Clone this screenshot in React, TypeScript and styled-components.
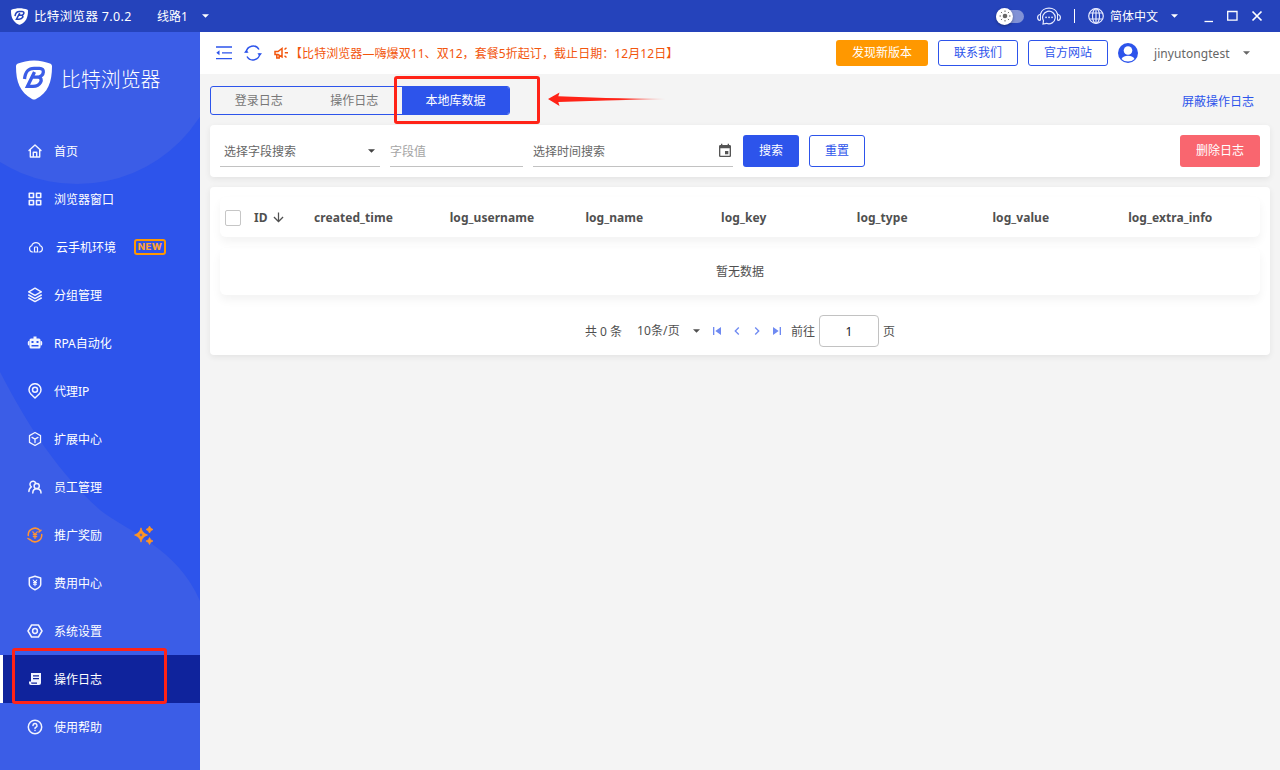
import React from "react";
import styled, { createGlobalStyle, css } from "styled-components";
import {
  MdChevronLeft,
  MdChevronRight,
  MdEvent,
  MdSkipNext,
  MdSkipPrevious,
  MdArrowDownward,
} from "react-icons/md";

const GlobalStyle = createGlobalStyle`
  * { box-sizing: border-box; }
  body {
    margin: 0;
    background: #f4f4f4;
    color: #505050;
    font: 12px/20px "Noto Sans", "Noto Sans CJK SC", sans-serif;
  }
  button, input { font: inherit; }
  svg { display: block; flex: none; }
`;

const Window = styled.div`
  position: relative;
  display: flex;
  flex-direction: column;
  width: 1280px;
  height: 770px;
  overflow: hidden;
`;

const TitleBar = styled.header`
  display: flex;
  align-items: center;
  height: 32px;
  padding: 0 17px 0 11px;
  background: #2543bb;
  color: #fff;
  white-space: nowrap;
`;

const Label = styled.span`
  padding-top: 2px;
`;

const AppName = styled(Label)`
  width: 99px;
  margin-left: 6px;
  font-size: 12.5px;
  letter-spacing: 0.35px;
`;

const RouteName = styled(Label)`
  margin-left: 24px;
  width: 44px;
`;

const TitleTools = styled.div`
  display: flex;
  align-items: center;
  margin-left: auto;
`;

const ThemeSwitch = styled.div`
  display: flex;
  align-items: center;
  width: 28px;
  height: 13px;
  margin-right: 13px;
  border-radius: 7px;
  background: #8192d6;
`;

const Knob = styled.span`
  display: grid;
  place-items: center;
  width: 17px;
  height: 17px;
  border-radius: 50%;
  background: #fff;
  box-shadow: 0 1px 3px rgba(0, 0, 0, 0.35);
`;

const ToolDivider = styled.span`
  width: 1px;
  height: 14px;
  margin: 0 13px;
  background: #fff;
`;

const Language = styled(Label)`
  width: 60px;
  margin-left: 6px;
`;

const ControlsHolder = styled.span`
  margin-left: 25px;
`;

const Body = styled.div`
  display: flex;
  flex: 1;
  min-height: 0;
`;

const Sidebar = styled.nav`
  position: relative;
  width: 200px;
  background: #2d54eb;
  color: #fff;
`;

const SidebarArt = styled.svg`
  position: absolute;
  inset: 0;
`;

const Brand = styled.div`
  position: relative;
  display: flex;
  align-items: center;
  gap: 9px;
  height: 95px;
  padding: 0 0 0 16px;
  font-size: 19.9px;
  font-weight: 300;
  white-space: nowrap;
`;

const NavItem = styled.a<{ $active?: boolean }>`
  position: relative;
  display: flex;
  align-items: center;
  height: 48px;
  padding-left: ${(p) => (p.$active ? 25 : 28)}px;
  color: #fff;
  ${(p) =>
    p.$active &&
    css`
      border-left: 3px solid #fff;
      background: #0f239c;
    `}
`;

const NavIcon = styled.span<{ $accent?: boolean; $wide?: boolean }>`
  display: flex;
  align-items: center;
  justify-content: center;
  width: ${(p) => (p.$wide ? 16 : 14)}px;
  margin-right: 12px;
  color: ${(p) => (p.$accent ? "#ff9433" : "#f2f4ff")};
`;

const NewBadge = styled.span`
  width: 32px;
  height: 16px;
  margin-left: 18px;
  border: 2px solid #ff9800;
  border-radius: 3px;
  color: #ffa033;
  font: 800 9.5px/12px Inter, sans-serif;
  letter-spacing: 0.4px;
  text-align: center;
`;

const SparkHolder = styled.span`
  margin-left: 32px;
`;

const Main = styled.main`
  display: flex;
  flex: 1;
  flex-direction: column;
  min-width: 0;
`;

const TopBar = styled.div`
  display: flex;
  align-items: center;
  height: 42px;
  padding: 0 29px 0 16px;
  background: #fff;
`;

const TopIcons = styled.div`
  display: flex;
  align-items: center;
  gap: 11px;
`;

const Notice = styled(Label)`
  margin-left: 1px;
  color: #f2560d;
  letter-spacing: 0.07px;
  white-space: nowrap;
`;

const TopActions = styled.div`
  display: flex;
  align-items: center;
  gap: 10px;
  margin-left: auto;
`;

type Tone = "orange" | "blue" | "outline" | "red";

const tones: Record<Tone, ReturnType<typeof css>> = {
  orange: css`
    background: #ff9800;
    color: #fff;
  `,
  blue: css`
    background: #2d54eb;
    color: #fff;
  `,
  outline: css`
    border: 1px solid #2d54eb;
    background: #fff;
    color: #2d54eb;
  `,
  red: css`
    background: #f9666f;
    color: #fff;
  `,
};

const Button = styled.button<{ $tone: Tone; $width: number; $tall?: boolean }>`
  width: ${(p) => p.$width}px;
  height: ${(p) => (p.$tall ? 32 : 26)}px;
  padding: 0;
  border: 0;
  border-radius: 3px;
  white-space: nowrap;
  ${(p) => tones[p.$tone]}
`;

const UserName = styled(Label)`
  width: 78px;
  margin: 0 0 0 6px;
  color: #666;
  letter-spacing: 0.07px;
`;

const TabRow = styled.div`
  display: flex;
  align-items: center;
  justify-content: space-between;
  height: 29px;
  margin: 12px 26px 10px 10px;
`;

const Tabs = styled.div`
  display: flex;
  width: 300px;
  height: 29px;
  border: 1px solid #2d54eb;
  border-radius: 3px;
  overflow: hidden;
`;

const Tab = styled.button<{ $active?: boolean }>`
  flex: ${(p) => (p.$active ? "0 0 107px" : "0 0 95.500px")};
  padding: 0;
  border: 0;
  background: ${(p) => (p.$active ? "#2d54eb" : "transparent")};
  color: ${(p) => (p.$active ? "#fff" : "#777")};
`;

const HideLink = styled(Label)`
  color: #2d54eb;
`;

const Card = styled.section`
  margin: 0 10px 10px;
  border-radius: 4px;
  background: #fff;
  box-shadow: 0 2px 6px rgba(0, 0, 0, 0.07);
`;

const FilterCard = styled(Card)`
  display: flex;
  align-items: center;
  gap: 10px;
  height: 52px;
  padding: 0 10px;
`;

const Field = styled.div<{ $width: number; $indent?: number; $end?: number; $muted?: boolean }>`
  display: flex;
  align-items: center;
  justify-content: space-between;
  width: ${(p) => p.$width}px;
  height: 31px;
  padding: 0 ${(p) => p.$end ?? 0}px 0 ${(p) => p.$indent ?? 0}px;
  border-bottom: 1px solid #c2c2c2;
  color: ${(p) => (p.$muted ? "#a5a5a5" : "#666")};
`;

const PushRight = styled.div`
  margin-left: auto;
`;

const TableCard = styled(Card)`
  height: 168px;
  padding: 10px;
`;

const TableRow = styled.div`
  display: flex;
  align-items: center;
  height: 40px;
  border-radius: 6px;
  box-shadow: 0 5px 10px rgba(0, 0, 0, 0.05);
  font-size: 12px;
  font-weight: 700;
`;

const CheckBox = styled.span`
  flex: none;
  width: 16px;
  height: 16px;
  margin: 1px 13px 0 5px;
  border: 1px solid #c6c6c6;
  border-radius: 2px;
`;

const IdCell = styled.span`
  display: flex;
  flex: none;
  align-items: center;
  gap: 4px;
  width: 60px;
`;

const HeadCell = styled(Label)`
  flex: 0 0 135.7px;
  letter-spacing: 0.06px;
  &:last-child {
    flex: 1 1 0;
    min-width: 0;
  }
`;

const EmptyRow = styled.div`
  display: grid;
  place-items: center;
  height: 47px;
  margin-top: 11px;
  border-radius: 6px;
  box-shadow: 0 5px 10px rgba(0, 0, 0, 0.05);
`;

const Pager = styled.div`
  display: flex;
  align-items: center;
  height: 32px;
  margin: 20px 0 0 365px;
  white-space: nowrap;
`;

const PagerText = styled(Label)<{ $width: number }>`
  width: ${(p) => p.$width}px;
`;

const PageSize = styled.span`
  width: 55px;
  letter-spacing: 0.12px;
`;

const PagerIcons = styled.span`
  display: flex;
  gap: 4px;
  margin: 0 6px 0 8px;
  color: #6f8af2;
`;

const PageInput = styled.input`
  width: 60px;
  height: 32px;
  margin-right: 4px;
  padding: 0;
  border: 1px solid #c2c2c2;
  border-radius: 4px;
  background: #fff;
  color: #222;
  text-align: center;
`;

const Highlight = styled.div<{ $x: number; $y: number; $w: number; $h: number }>`
  position: absolute;
  left: ${(p) => p.$x}px;
  top: ${(p) => p.$y}px;
  width: ${(p) => p.$w}px;
  height: ${(p) => p.$h}px;
  border: 3px solid #ff2317;
  border-radius: 3px;
`;

const ArrowMark = styled.svg`
  position: absolute;
  left: 546px;
  top: 90px;
`;

const Caret = ({ color = "currentColor" }: { color?: string }) => (
  <svg width="9" height="4" viewBox="0 0 9 4">
    <path d="M1 0.300H8L4.500 3.800Z" fill={color} />
  </svg>
);

const Shield = ({ width, height, hole }: { width: number; height: number; hole: string }) => (
  <svg width={width} height={height} viewBox="0 0 36 40" preserveAspectRatio="none">
    <path d="M18 0.500C24 .5 30 2 34 3.500C35.500 4 36 5 36 6.500C36 22 32 33 20 39Q18 40 16 39C4 32 0 22 0 6.500C0 5 .5 4 2 3.500C6 2 12 .5 18 .5Z" fill="#fff" />
    <path
      d="M8.500 19C9.500 11 12.500 8.300 18 8.300H23.500C29 8.300 28.500 15.500 22.500 17.200C28 18.500 24.500 26.300 17 26.300H11.500L18.500 12M16.500 17.200H22"
      fill="none"
      stroke={hole}
      strokeWidth="3.300"
    />
  </svg>
);

const Stroke = ({ size = 16, width = 1.3, children }: { size?: number; width?: number; children: React.ReactNode }) => (
  <svg width={size} height={size} viewBox="0 0 16 16" fill="none" stroke="currentColor" strokeWidth={width} strokeLinejoin="round" strokeLinecap="round">
    {children}
  </svg>
);

const HomeIcon = () => (
  <Stroke width={1.4}>
    <path d="M2 7.600 8 2l6 5.600M3.300 6.800V14h9.400V6.800M6.300 14V9.300h3.400V14" />
  </Stroke>
);

const GridIcon = () => (
  <Stroke width={1.6}>
    <path d="M2.300 2.300h4.200v4.200h-4.200zM9.500 2.300h4.200v4.200h-4.200zM2.300 9.500h4.200v4.200h-4.200zM9.500 9.500h4.200v4.200h-4.200z" />
  </Stroke>
);

const CloudIcon = () => (
  <Stroke width={1.2}>
    <path d="M5 13H4.300A3.200 3.200 0 0 1 3.700 6.800 4.400 4.400 0 0 1 12.200 6.800 3.200 3.200 0 0 1 11.700 13H11M6.500 13V8.800q0-.8.8-.8h1.400q.8 0 .8.8V13M6.500 13h3" />
  </Stroke>
);

const LayersIcon = () => (
  <Stroke width={1.5}>
    <path d="M8 1.200 14.300 4.800 8 8.400 1.700 4.800ZM1.700 8 8 11.600 14.300 8M1.700 11 8 14.600 14.300 11" />
  </Stroke>
);

const RobotIcon = () => (
  <svg width="16" height="16" viewBox="0 0 16 16" fill="currentColor">
    <path
      fillRule="evenodd"
      d="M6.500 1.500h3V3.500H12Q13.500 3.500 13.500 5V12Q13.500 13.500 12 13.500H4Q2.500 13.500 2.500 12V5Q2.500 3.500 4 3.500H6.500ZM4.500 6v2h2V6ZM9.500 6v2h2V6ZM4.500 10v1.500h7V10Z"
    />
    <path d="M2.500 6v4.500H2Q.8 10.500.8 9.300V7.200Q.8 6 2 6ZM13.500 6v4.500h.5q1.200 0 1.200-1.200V7.200Q15.200 6 14 6Z" />
  </svg>
);

const PinIcon = () => (
  <Stroke width={1.5}>
    <path d="M8 15 3.800 11A6 6 0 1 1 12.200 11Z" />
    <circle cx="8" cy="6.800" r="2.500" />
  </Stroke>
);

const BoxIcon = () => (
  <Stroke width={1.3}>
    <path d="M8 1.500 13.500 4.600V11.400L8 14.500 2.500 11.400V4.600ZM5 6.400l3 1.700 3-1.700M8 8.100v3.400" />
  </Stroke>
);

const PeopleIcon = () => (
  <Stroke width={1.5}>
    <path d="M1.900 12.500c0-2.300.8-3.700 2.500-4.700A3 3 0 1 1 8.700 4" />
    <circle cx="9.700" cy="7" r="2.600" />
    <path d="M5.800 14c0-2.600 1.500-4.300 3.900-4.300S14 11.400 14 14" />
  </Stroke>
);

const RewardIcon = () => (
  <Stroke width={1.5}>
    <path d="M1.300 8.500A6.700 6.700 0 0 1 13 3.500M14.700 7.500A6.700 6.700 0 0 1 3 12.500M14 3.200 12 5M1 11.500l1.800 1.200" />
    <path d="M5.800 4.800 8 7.400l2.200-2.600M8 7.400v4M6.300 7.700h3.400M6.300 9.600h3.400" strokeWidth="1.200" />
  </Stroke>
);

const FeeIcon = () => (
  <Stroke width={1.5}>
    <path d="M8 1.200 13.700 3v6.500c0 2.200-2.500 3.800-5.700 5.300-3.200-1.500-5.700-3.100-5.700-5.300V3Z" />
    <path d="M6.200 5 8 7.200 9.800 5M8 7.400v3.300M6.500 7.600h3M6.500 9.200h3" strokeWidth="1.100" />
  </Stroke>
);

const SettingsIcon = () => (
  <Stroke width={1.5}>
    <path d="M4.600 2h6.800L15 8l-3.600 6H4.600L1 8Z" />
    <circle cx="8" cy="8" r="2.400" />
  </Stroke>
);

const LogIcon = () => (
  <svg width="16" height="16" viewBox="0 0 16 16" fill="currentColor">
    <path fillRule="evenodd" d="M4 2H14V12Q14 14 12 14H4Q2 14 2 12V10.500H4ZM6 4.200V5.500h6V4.200ZM6 7V8.300h6V7ZM4 11.500Q4 12.800 5 12.800h5V11.500Z" />
  </svg>
);

const HelpIcon = () => (
  <Stroke width={1.5}>
    <circle cx="8" cy="8" r="6.700" />
    <path d="M6 6.500A2 2 0 1 1 8.900 8.300Q8 8.700 8 9.400M8 11.500v.1" />
  </Stroke>
);

const SparkIcon = () => (
  <svg width="20" height="20" viewBox="0 0 20 20" fill="#ff9422">
    <path fillRule="evenodd" d="M7 2.800Q8 8 13.500 10 8 12 7 17.200 6 12 .5 10 6 8 7 2.800ZM7 8.600a1.400 1.400 0 1 0 0 2.800 1.400 1.400 0 0 0 0-2.800Z" stroke="#ff9422" strokeWidth="0.700" />
    <path d="M15.500 1Q16.200 3.800 19 4.500 16.200 5.200 15.500 8 14.800 5.200 12 4.500 14.800 3.800 15.500 1ZM15.500 12.500q.7 2.800 3.500 3.500-2.800.7-3.500 3.500-.7-2.800-3.500-3.500 2.800-.7 3.500-3.500Z" stroke="#ff9422" strokeWidth="0.700" />
  </svg>
);

const SunIcon = () => (
  <svg width="12" height="12" viewBox="0 0 12 12" stroke="#666" strokeWidth="1">
    <circle cx="6" cy="6" r="2.300" fill="#666" stroke="none" />
    <path d="M6 .5v1.500M6 10v1.500M.5 6H2M10 6h1.500M2.100 2.100l1 1M8.900 8.900l1 1M2.100 9.900l1-1M8.900 3.100l1-1" />
  </svg>
);

const SupportIcon = () => (
  <svg width="24" height="18" viewBox="0 0 24 18" fill="none" stroke="#e6eaff" strokeWidth="1.200" strokeLinecap="round">
    <path d="M3.500 7A8.700 7.500 0 0 1 20.500 7M3 7.500Q.6 8 .6 10.500T3 13.500M21 7.500q2.400.5 2.400 3T21 13.500" />
    <path d="M3.500 7.500v5.500M20.500 7.500v5.500" strokeWidth="1" />
    <path d="M6 17l.5-3.300A6.300 6.300 0 1 1 9.500 16.300Z" />
    <path d="M9 10.300h.1M12 10.300h.1M15 10.300h.1" strokeWidth="1.700" />
  </svg>
);

const GlobeIcon = () => (
  <svg width="16" height="16" viewBox="0 0 16 16" fill="none" stroke="#e6eaff" strokeWidth="1.200">
    <circle cx="8" cy="8" r="7.300" />
    <ellipse cx="8" cy="8" rx="3.500" ry="7.300" />
    <path d="M8 .7v14.600M1.500 5h13M1.500 11h13" />
  </svg>
);

const WindowControls = () => (
  <svg width="59" height="14" viewBox="0 0 59 14" fill="none" stroke="#fff" strokeWidth="1.300">
    <path d="M0.500 12.500h8.500" />
    <path d="M23.700 2.500h9.300v8.700h-9.300z" />
    <path d="M48.500 2.500l9 9M57.500 2.500l-9 9" strokeWidth="1.700" />
  </svg>
);

const CollapseIcon = () => (
  <svg width="16" height="14" viewBox="0 0 16 14" stroke="#2d54eb" strokeWidth="1.300">
    <path d="M0 1h16M6 6.800h10M0 12.600h16" />
    <path d="M3.500 4.300V9.300L.3 6.800Z" fill="#2d54eb" stroke="none" />
  </svg>
);

const RefreshIcon = () => (
  <svg width="20" height="16" viewBox="-1 0 20 16" fill="none" stroke="#2d54eb" strokeWidth="1.400">
    <path d="M2.300 7.500A6.800 6.800 0 0 1 15 4.500M15.700 8.500A6.800 6.800 0 0 1 3 11.500" />
    <path d="M0 7.800h4.600L2.300 4.800ZM13.400 8.200H18l-2.300 3Z" fill="#2d54eb" stroke="none" />
  </svg>
);

const HornIcon = () => (
  <svg width="15" height="14" viewBox="1 0 15 14" fill="none" stroke="#f2560d" strokeWidth="1.500">
    <path d="M2 5.500h3L9 2.500v8.500L5 8.500H2ZM3.800 8.800V12h2.400V9" />
    <path d="M11.500 3.500l2-1.700M11.800 6.700H15M11.500 9.800l2 1.700" />
  </svg>
);

const AvatarIcon = () => (
  <svg width="20" height="20" viewBox="0 0 20 20">
    <circle cx="10" cy="10" r="10" fill="#2d54eb" />
    <circle cx="10" cy="7.500" r="4.300" fill="#fff" />
    <path d="M3.500 16Q5.500 12.700 10 12.700T16.500 16Q14 18.600 10 18.600T3.500 16Z" fill="#fff" />
  </svg>
);

const navItems: { label: string; icon: React.ReactNode; badge?: boolean; spark?: boolean; active?: boolean }[] = [
  { label: "首页", icon: <HomeIcon /> },
  { label: "浏览器窗口", icon: <GridIcon /> },
  { label: "云手机环境", icon: <CloudIcon />, badge: true },
  { label: "分组管理", icon: <LayersIcon /> },
  { label: "RPA自动化", icon: <RobotIcon /> },
  { label: "代理IP", icon: <PinIcon /> },
  { label: "扩展中心", icon: <BoxIcon /> },
  { label: "员工管理", icon: <PeopleIcon /> },
  { label: "推广奖励", icon: <RewardIcon />, spark: true },
  { label: "费用中心", icon: <FeeIcon /> },
  { label: "系统设置", icon: <SettingsIcon /> },
  { label: "操作日志", icon: <LogIcon />, active: true },
  { label: "使用帮助", icon: <HelpIcon /> },
];

const columns = ["created_time", "log_username", "log_name", "log_key", "log_type", "log_value", "log_extra_info"];

export default function App() {
  return (
    <Window>
      <GlobalStyle />
      <TitleBar>
        <Shield width={17} height={17} hole="#2543bb" />
        <AppName>比特浏览器 7.0.2</AppName>
        <RouteName>线路1</RouteName>
        <Caret />
        <TitleTools>
          <ThemeSwitch>
            <Knob>
              <SunIcon />
            </Knob>
          </ThemeSwitch>
          <SupportIcon />
          <ToolDivider />
          <GlobeIcon />
          <Language>简体中文</Language>
          <Caret />
          <ControlsHolder>
            <WindowControls />
          </ControlsHolder>
        </TitleTools>
      </TitleBar>
      <Body>
        <Sidebar>
          <SidebarArt width="200" height="738" viewBox="0 32 200 738">
            <circle cx="77" cy="38" r="146" fill="#3b5de7" />
            <path d="M0 372C20 410 50 465 100 510C125 530 178 548 200 601V770H0Z" fill="#3b5de7" />
          </SidebarArt>
          <Brand>
            <Shield width={36} height={40} hole="#3b5de7" />
            比特浏览器
          </Brand>
          {navItems.map((item) => (
            <NavItem key={item.label} $active={item.active}>
              <NavIcon $accent={item.spark} $wide={item.badge}>
                {item.icon}
              </NavIcon>
              <Label>{item.label}</Label>
              {item.badge && <NewBadge>NEW</NewBadge>}
              {item.spark && (
                <SparkHolder>
                  <SparkIcon />
                </SparkHolder>
              )}
            </NavItem>
          ))}
        </Sidebar>
        <Main>
          <TopBar>
            <TopIcons>
              <CollapseIcon />
              <RefreshIcon />
              <HornIcon />
            </TopIcons>
            <Notice>【比特浏览器—嗨爆双11、双12，套餐5折起订，截止日期：12月12日】</Notice>
            <TopActions>
              <Button $tone="orange" $width={92}>发现新版本</Button>
              <Button $tone="outline" $width={80}>联系我们</Button>
              <Button $tone="outline" $width={80}>官方网站</Button>
              <AvatarIcon />
              <UserName>jinyutongtest</UserName>
              <Caret color="#666" />
            </TopActions>
          </TopBar>
          <TabRow>
            <Tabs>
              <Tab>登录日志</Tab>
              <Tab>操作日志</Tab>
              <Tab $active>本地库数据</Tab>
            </Tabs>
            <HideLink>屏蔽操作日志</HideLink>
          </TabRow>
          <FilterCard>
            <Field $width={160} $indent={4} $end={4}>
              <Label>选择字段搜索</Label>
              <Caret color="#444" />
            </Field>
            <Field $width={133} $muted>
              <Label>字段值</Label>
            </Field>
            <Field $width={200}>
              <Label>选择时间搜索</Label>
              <MdEvent size={16} color="#555" />
            </Field>
            <Button $tone="blue" $width={56} $tall>搜索</Button>
            <Button $tone="outline" $width={56} $tall>重置</Button>
            <PushRight>
              <Button $tone="red" $width={80} $tall>删除日志</Button>
            </PushRight>
          </FilterCard>
          <TableCard>
            <TableRow>
              <CheckBox />
              <IdCell>
                <Label>ID</Label>
                <MdArrowDownward size={15} />
              </IdCell>
              {columns.map((name) => (
                <HeadCell key={name}>{name}</HeadCell>
              ))}
            </TableRow>
            <EmptyRow>暂无数据</EmptyRow>
            <Pager>
              <PagerText $width={52}>共 0 条</PagerText>
              <PageSize>10条/页</PageSize>
              <Caret />
              <PagerIcons>
                <MdSkipPrevious size={16} />
                <MdChevronLeft size={16} />
                <MdChevronRight size={16} />
                <MdSkipNext size={16} />
              </PagerIcons>
              <PagerText $width={28}>前往</PagerText>
              <PageInput defaultValue="1" />
              <Label>页</Label>
            </Pager>
          </TableCard>
        </Main>
      </Body>
      <Highlight $x={12} $y={648} $w={155} $h={56} />
      <Highlight $x={394} $y={76} $w={146} $h={48} />
      <ArrowMark width="122" height="18" viewBox="0 0 122 18">
        <defs>
          <linearGradient id="fade">
            <stop offset="0.6" stopColor="#ff2317" />
            <stop offset="1" stopColor="#ff2317" stopOpacity="0.2" />
          </linearGradient>
        </defs>
        <path d="M2 9 13.500 2.500 12.300 6.300 60 8 120 9 60 10.500 12.300 12 13.500 16Z" fill="url(#fade)" />
      </ArrowMark>
    </Window>
  );
}
